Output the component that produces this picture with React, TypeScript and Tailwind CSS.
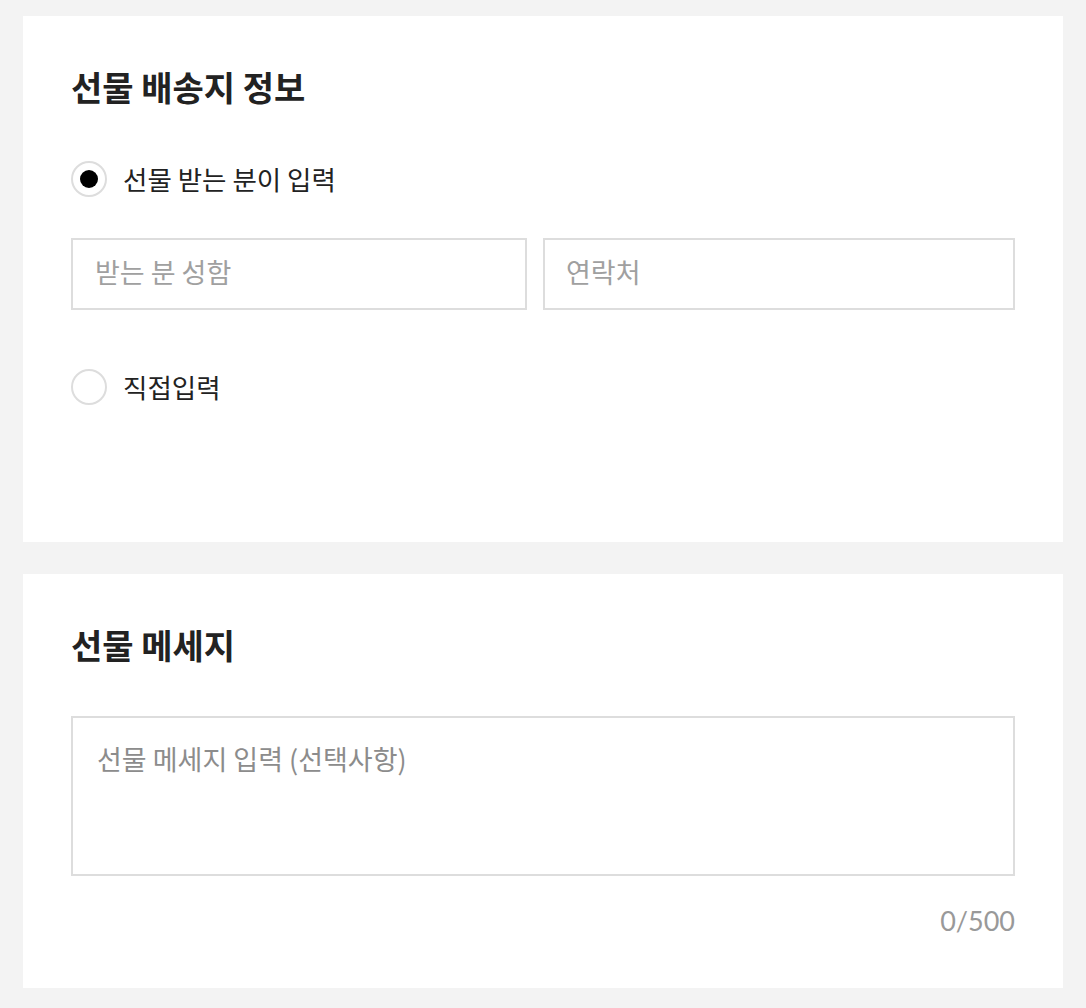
import React from "react";

const font = { fontFamily: '"Noto Sans CJK KR", "Noto Sans", sans-serif' };

function Radio({ checked, label }: { checked: boolean; label: string }) {
  return (
    <label className="flex items-center gap-[16px] h-[36px]">
      <span className="w-[36px] h-[36px] rounded-full border-2 border-[#dddddd] bg-white flex items-center justify-center">
        {checked && <span className="w-[18px] h-[18px] rounded-full bg-black" />}
      </span>
      <span className="text-[26.5px] leading-[34px] text-[#222222]">{label}</span>
    </label>
  );
}

export default function App() {
  return (
    <div className="min-h-[1008px] bg-[#f3f3f3] pt-[16px] px-[23px] pb-[20px]" style={font}>
      <section className="bg-white h-[526px] px-[48px] pt-[47px]">
        <h2 className="text-[34px] leading-[48px] font-bold text-[#222222]">선물 배송지 정보</h2>
        <div className="mt-[50px]">
          <Radio checked label="선물 받는 분이 입력" />
        </div>
        <div className="mt-[41px] flex gap-[16px]">
          <input
            className="w-[456px] min-w-0 h-[72px] border-2 border-[#dddddd] px-[22px] pb-[6px] text-[27px] text-[#222] placeholder:text-[#a0a0a0] outline-none"
            placeholder="받는 분 성함"
            style={font}
          />
          <input
            className="flex-1 min-w-0 h-[72px] border-2 border-[#dddddd] px-[21px] pb-[6px] text-[27px] text-[#222] placeholder:text-[#a0a0a0] outline-none"
            placeholder="연락처"
            style={font}
          />
        </div>
        <div className="mt-[59px]">
          <Radio checked={false} label="직접입력" />
        </div>
      </section>
      <section className="bg-white mt-[32px] px-[48px] pt-[47px] pb-[49px]">
        <h2 className="text-[34px] leading-[48px] font-bold text-[#222222]">선물 메세지</h2>
        <textarea
          className="mt-[47px] block w-full h-[160px] border-2 border-[#dddddd] px-[24px] pt-[23px] text-[27px] leading-[36px] text-[#222] placeholder:text-[#8c8c8c] outline-none resize-none"
          placeholder="선물 메세지 입력 (선택사항)"
          style={font}
        />
        <div
          className="mt-[27px] text-right text-[27px] leading-[36px] text-[#999999]"
          style={{ fontFamily: 'Lato, "Noto Sans", sans-serif' }}
        >
          0/500
        </div>
      </section>
    </div>
  );
}
